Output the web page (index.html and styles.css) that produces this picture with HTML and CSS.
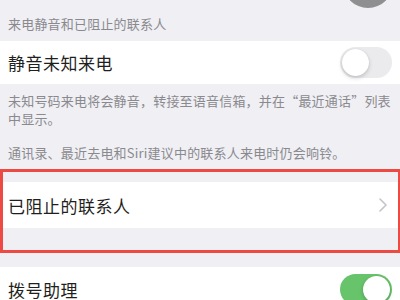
FILE: index.html
```html
<!DOCTYPE html>
<html lang="zh-CN">
<head>
<meta charset="utf-8">
<link rel="stylesheet" href="styles.css">
</head>
<body>
<div class="page">
  <div class="cut"><div class="disk"></div></div>
  <div class="foot foot-top">来电静音和已阻止的联系人</div>
  <div class="row row-a">
    <span class="label">静音未知来电</span>
    <span class="toggle"><span class="knob"></span></span>
  </div>
  <div class="foot foot-mid">
    <p>未知号码来电将会静音，转接至语音信箱，并在“最近通话”列表中显示。</p>
    <p class="p2">通讯录、最近去电和Siri建议中的联系人来电时仍会响铃。</p>
  </div>
  <div class="mark">
    <div class="row row-b">
      <span class="label">已阻止的联系人</span>
      <svg class="chev" width="8" height="14" viewBox="0 0 8 14"><path d="M1 1l6 6-6 6" fill="none" stroke="#c4c4c8" stroke-width="1.6" stroke-linecap="round" stroke-linejoin="round"/></svg>
    </div>
  </div>
  <div class="row row-c">
    <span class="label">拨号助理</span>
    <span class="toggle on"><span class="knob"></span></span>
  </div>
</div>
</body>
</html>
```
FILE: styles.css
```css
html, body {
  margin: 0;
  padding: 0;
  background: #efeff4;
}
body {
  font-family: "Noto Sans CJK SC", "Noto Sans", sans-serif;
  width: 400px;
  height: 300px;
  overflow: hidden;
}
.page {
  display: flex;
  flex-direction: column;
}
.cut {
  height: 8px;
  overflow: hidden;
  display: flex;
  justify-content: flex-end;
  align-items: flex-end;
  padding-right: 7px;
}
.disk {
  flex: none;
  width: 50px;
  height: 50px;
  border-radius: 50%;
  background: #8f8f91;
}
.foot {
  font-size: 13px;
  line-height: 18px;
  letter-spacing: 0.2px;
  color: #8a8a8e;
  padding: 0 3px 0 8px;
}
.foot p {
  margin: 0;
}
.foot-top {
  padding-top: 7px;
  padding-bottom: 8px;
}
.foot-mid {
  padding-top: 8px;
  padding-bottom: 7px;
}
.foot-mid .p2 {
  margin-top: 16px;
}
.row {
  background: #fff;
  display: flex;
  align-items: center;
  justify-content: space-between;
  padding: 0 8px;
}
.label {
  font-size: 17px;
  letter-spacing: 0.5px;
  color: #1f1f21;
}
.row-a {
  height: 43px;
}
.row-c {
  height: 44px;
  margin-top: 14px;
}
.mark {
  border: 3px solid #ec4a42;
  border-right-width: 2px;
  padding: 10px 0 22px;
}
.row-b {
  height: 46px;
  padding: 0 8px 0 5px;
}
.chev {
  margin-right: 3px;
}
.toggle {
  width: 52px;
  height: 31px;
  box-sizing: border-box;
  border-radius: 16px;
  background: #ebebee;
  padding: 2px;
  display: flex;
}
.toggle .knob {
  width: 27px;
  height: 27px;
  border-radius: 50%;
  background: #fff;
  box-shadow: 0 2px 4px rgba(0, 0, 0, 0.18), 0 0 1px rgba(0, 0, 0, 0.12);
}
.toggle.on {
  background: #67c46b;
  justify-content: flex-end;
}
```
